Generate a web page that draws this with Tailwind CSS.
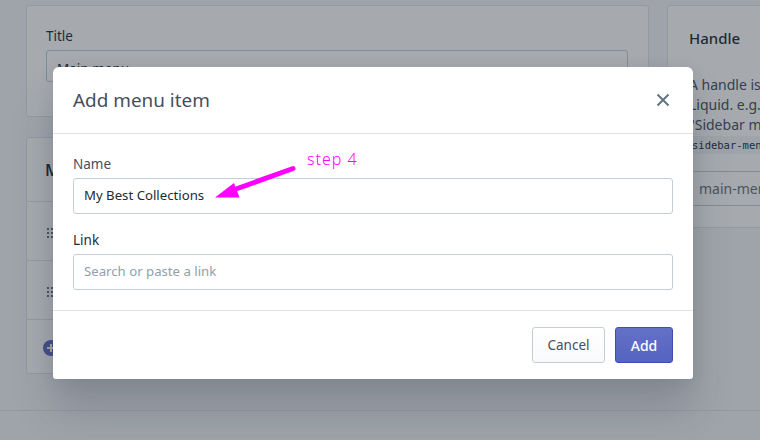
<!DOCTYPE html>
<html><head><meta charset="utf-8">
<script src="https://cdn.jsdelivr.net/npm/@tailwindcss/browser@4"></script>
</head>
<body class="m-0 overflow-hidden font-['Noto_Sans',sans-serif]">
<div class="relative w-[760px] h-[440px] overflow-hidden bg-[#f4f6f8] text-[#212b36]">
  <div class="h-[411px] border-b border-[#dfe3e8] px-[26px]">
    <div class="pt-[5px] flex gap-[18px] items-start w-[800px]">
      <div class="w-[623px] flex flex-col gap-[20px] shrink-0">
        <div class="h-[112px] bg-white rounded-[3px] border border-[#dfe3e8] pl-[19px] pr-[20px] pt-[20px]">
          <div class="text-[13.500px] leading-[20px] mb-[4px]">Title</div>
          <div class="h-[32px] w-[582px] border border-[#c4cdd5] rounded-[3px] px-[10px] text-[13.500px] leading-[36px] bg-white">Main menu</div>
        </div>
        <div class="h-[237px] bg-white rounded-[3px] border border-[#dfe3e8]">
          <div class="h-[64px] border-b border-[#dfe3e8] px-[18px] pt-[20px] text-[16px] font-semibold leading-[24px]">Menu items</div>
          <div class="h-[59px] border-b border-[#dfe3e8] pl-[20px] pt-[3px] flex items-center">
            <svg width="7" height="10" viewBox="0 0 7 10" class="fill-[#637381]"><rect width="2" height="2"/><rect x="4" width="2" height="2"/><rect y="4" width="2" height="2"/><rect x="4" y="4" width="2" height="2"/><rect y="8" width="2" height="2"/><rect x="4" y="8" width="2" height="2"/></svg>
          </div>
          <div class="h-[59px] border-b border-[#dfe3e8] pl-[20px] pt-[3px] flex items-center">
            <svg width="7" height="10" viewBox="0 0 7 10" class="fill-[#637381]"><rect width="2" height="2"/><rect x="4" width="2" height="2"/><rect y="4" width="2" height="2"/><rect x="4" y="4" width="2" height="2"/><rect y="8" width="2" height="2"/><rect x="4" y="8" width="2" height="2"/></svg>
          </div>
          <div class="pl-[16px] pt-[20px]">
            <div class="w-[16px] h-[16px] rounded-full bg-[#5c6ac4] flex items-center justify-center text-white">
              <svg width="10" height="10" viewBox="0 0 10 10"><path d="M5 1v8M1 5h8" stroke="white" stroke-width="2"/></svg>
            </div>
          </div>
        </div>
      </div>
      <div class="w-[300px] h-[223px] bg-white rounded-[3px] border border-[#dfe3e8] shrink-0 pl-[21px] pr-[20px] pt-[20px]">
        <div class="text-[15px] font-medium leading-[24px] mb-[25px]">Handle</div>
        <div class="text-[14px] leading-[20px] text-[#454f5b] whitespace-nowrap">A handle is used to reference a menu in<br>Liquid. e.g. a menu with the title<br>"Sidebar menu" has the handle</div>
        <div class="h-[18px] mt-[1px] w-[200px] pl-[3px] bg-[#f4f6f8] font-['DejaVu_Sans_Mono',monospace] text-[10.500px] leading-[18px] text-[#212b36]">sidebar-menu</div>
        <div class="mt-[17px] h-[35px] border border-[#c4cdd5] rounded-[3px] -ml-[2px] pl-[11px] text-[14px] leading-[33px] text-[#637381]">main-menu</div>
      </div>
    </div>
  </div>

  <div class="absolute inset-0 bg-[#212b36]/40"></div>

  <div class="absolute left-[53px] top-[67px] w-[640px] h-[312px] bg-white rounded-t-[6px] rounded-b-[3px] shadow-[0_31px_41px_0_rgba(32,42,53,0.2),0_2px_16px_0_rgba(32,42,54,0.08)] flex flex-col">
    <div class="h-[67px] shrink-0 border-b border-[#dfe3e8] flex items-center justify-between pl-[20px] pr-[23px]">
      <h2 class="text-[18.900px] leading-[28px] text-[#454f5b] font-normal">Add menu item</h2>
      <svg width="14" height="14" viewBox="0 0 14 14" fill="none" stroke="#637381" stroke-width="2"><path d="M1.500 1.500l11 11M12.500 1.500l-11 11"/></svg>
    </div>
    <div class="h-[177px] shrink-0 border-b border-[#dfe3e8] px-[20px] pt-[20px]">
      <div class="text-[13.500px] leading-[20px] text-[#454f5b] h-[24px]">Name</div>
      <div class="h-[36px] border border-[#c4cdd5] rounded-[3px] pl-[10px] flex items-center text-[13.200px] text-[#212b36]">My Best Collections</div>
      <div class="text-[13.500px] leading-[20px] text-[#212b36] mt-[16px] h-[24px]">Link</div>
      <div class="h-[36px] border border-[#c4cdd5] rounded-[3px] pl-[10px] flex items-center text-[13.200px] text-[#919eab]">Search or paste a link</div>
    </div>
    <div class="flex-1 flex items-start justify-end gap-[10px] pt-[16px] pr-[20px]">
      <button class="w-[73px] h-[36px] rounded-[3px] border border-[#c4cdd5] bg-gradient-to-b from-white to-[#f9fafb] text-[13.500px] text-[#454f5b]">Cancel</button>
      <button class="w-[58px] h-[36px] rounded-[3px] border border-[#3f4eae] bg-gradient-to-b from-[#6371c7] to-[#5563c1] text-[14px] font-medium text-white">Add</button>
    </div>
  </div>

  <div class="absolute left-[307px] top-[148px] text-[16px] leading-[22px] tracking-[1px] font-light text-[#ff00ff] whitespace-nowrap">step 4</div>
  <svg class="absolute left-[200px] top-[150px]" width="110" height="60" viewBox="0 0 110 60">
    <path d="M93 18.500L36 39" stroke="#ff00ff" stroke-width="5" stroke-linecap="round" fill="none"/>
    <path d="M15 47.500L34 33L39.500 47.500Z" fill="#ff00ff"/>
  </svg>
</div>
</body></html>
